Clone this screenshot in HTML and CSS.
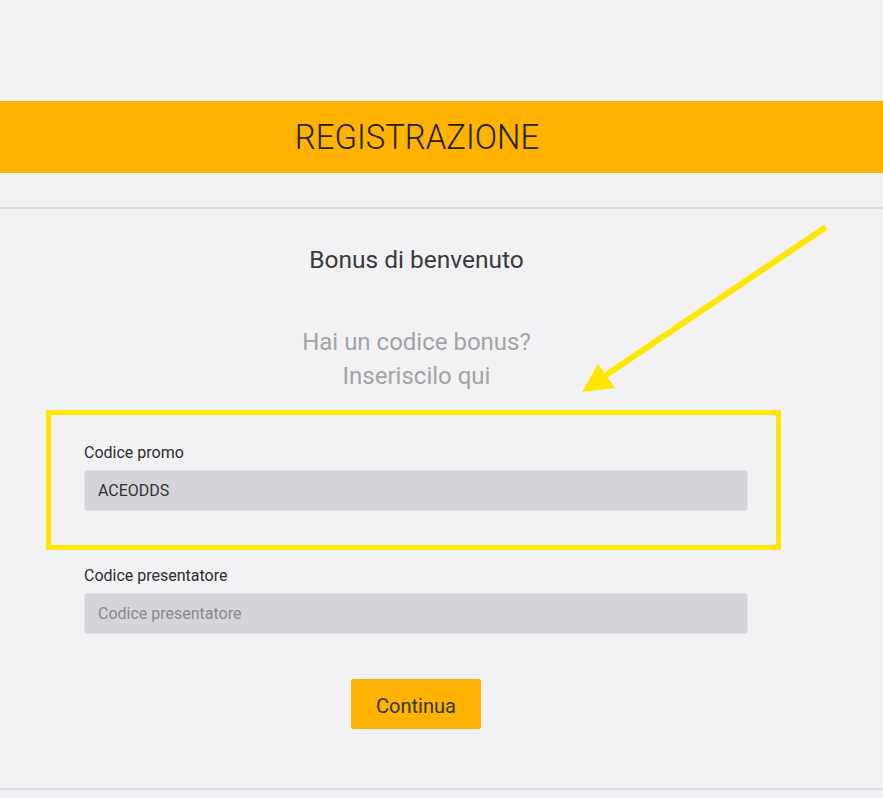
FILE: index.html
```html
<!DOCTYPE html>
<html lang="it">
<head>
    <meta charset="UTF-8">
    <meta name="viewport" content="width=device-width, initial-scale=1.0">
    <title>Registrazione</title>
    <link rel="stylesheet" href="styles.css">
</head>
<body>
    <div class="banner">
        <div class="wrap">
            <h1 class="banner-title">REGISTRAZIONE</h1>
        </div>
    </div>

    <div class="divider"></div>

    <div class="wrap">
        <h2 class="step-title">Bonus di benvenuto</h2>
        <p class="step-hint">Hai un codice bonus?<br>Inseriscilo qui</p>

        <form class="bonus-form">
            <div class="field">
                <label for="promo">Codice promo</label>
                <input type="text" id="promo" name="promo" value="ACEODDS">
            </div>

            <div class="field">
                <label for="referrer">Codice presentatore</label>
                <input type="text" id="referrer" name="referrer" placeholder="Codice presentatore">
            </div>

            <div class="actions">
                <button type="button" class="btn-continue">Continua</button>
            </div>
        </form>
    </div>

    <div class="divider divider-bottom"></div>

    <!-- evidenziazione sopra il campo promo -->
    <div class="highlight-box"></div>
    <svg class="highlight-arrow" width="260" height="180" viewBox="0 0 260 180">
        <line x1="254" y1="4" x2="34" y2="152" stroke="#ffe600" stroke-width="6"/>
        <polygon points="10,169 26,141 43,165" fill="#ffe600"/>
    </svg>
</body>
</html>
```

FILE: styles.css
```css
body {
    margin: 0;
    padding: 0;
    background-color: #f2f2f4;
    font-family: 'Roboto', 'Liberation Sans', sans-serif;
    color: #333;
    position: relative;
    min-height: 798px;
}

.wrap {
    width: 833px;
    text-align: center;
}

.banner {
    margin-top: 101px;
    height: 72px;
    background-color: #ffb300;
    display: flex;
    align-items: center;
}

.banner-title {
    margin: 0;
    font-weight: 300;
    font-size: 35px;
    color: #222;
    display: inline-block;
    transform: scaleX(0.94);
}

.divider {
    margin-top: 34px;
    border-top: 2px solid #dcdce0;
}

.divider-bottom {
    margin-top: 59px;
}

.step-title {
    margin: 36px 0 0;
    font-size: 24.5px;
    line-height: 30px;
    font-weight: 400;
    color: #3a3a3a;
}

.step-hint {
    margin: 50px 0 0;
    font-size: 24px;
    line-height: 34px;
    color: #a3a3a3;
}

.bonus-form {
    width: 664px;
    margin: 51px auto 0 84px;
    text-align: left;
}

.field + .field {
    margin-top: 56px;
}

.field label {
    display: block;
    font-size: 16px;
    line-height: 18px;
    color: #2d2d2d;
    margin-bottom: 8px;
}

.field input {
    display: block;
    width: 100%;
    height: 41px;
    box-sizing: border-box;
    padding: 0 13px;
    border: 1px solid #e2e2e6;
    border-radius: 3px;
    background-color: #d5d4da;
    font-family: inherit;
    font-size: 16px;
    color: #333;
}

.field input::placeholder {
    color: #888;
}

.actions {
    text-align: center;
    margin-top: 45px;
}

.btn-continue {
    display: inline-block;
    vertical-align: top;
    width: 130px;
    height: 50px;
    padding-top: 4px;
    border: none;
    border-radius: 3px;
    background-color: #ffb300;
    font-family: inherit;
    font-size: 20px;
    color: #333;
    cursor: pointer;
}

.highlight-box {
    position: absolute;
    left: 46px;
    top: 410px;
    width: 735px;
    height: 140px;
    box-sizing: border-box;
    border: 5px solid #ffe600;
}

.highlight-arrow {
    position: absolute;
    left: 572px;
    top: 223px;
}
```
